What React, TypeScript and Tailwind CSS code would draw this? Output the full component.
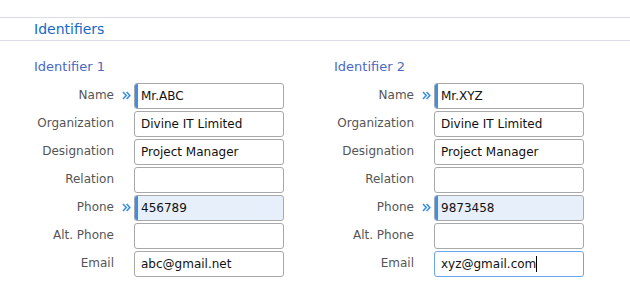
import React from 'react';

type Field = {
  label: string;
  value: string;
  required?: boolean;
  tint?: boolean;
  focused?: boolean;
};

const Chevrons: React.FC = () => (
  <svg width="9" height="9" viewBox="0 0 9 9" className="text-[#3b8fe8]">
    <path d="M1 1l3.2 3.5L1 8M4.6 1l3.2 3.5L4.6 8" fill="none" stroke="currentColor" strokeWidth="1.6" />
  </svg>
);

const Row: React.FC<{ field: Field }> = ({ field }) => (
  <div className="flex items-center h-[26px]">
    <div className="w-[80px] text-right text-[12px] text-[#555] pb-[2px]">{field.label}</div>
    <div className="w-[20px] flex justify-start pl-[8px] pb-[2px]">{field.required && <Chevrons />}</div>
    <div
      className={`relative w-[150px] h-[26px] rounded-[3px] border flex items-center pl-[6px] text-[12px] text-[#111] overflow-hidden ${
        field.focused ? 'border-[#6aa6f0]' : 'border-[#a8a8a8]'
      } ${field.tint ? 'bg-[#e7effb]' : 'bg-white'}`}
    >
      {field.required && <div className="absolute left-0 top-0 bottom-0 w-[3px] bg-[#3b8fe8]" />}
      <span>{field.value}</span>
      {field.focused && <span className="w-px h-[16px] bg-black" />}
    </div>
  </div>
);

const Identifier: React.FC<{ title: string; fields: Field[] }> = ({ title, fields }) => (
  <div className="w-[300px] shrink-0">
    <div className="text-[13px] leading-none text-[#4a6ac2] h-[24px] pt-[1px]">{title}</div>
    <div className="flex flex-col gap-[2px]">
      {fields.map((f, i) => (
        <Row key={i} field={f} />
      ))}
    </div>
  </div>
);

const App: React.FC = () => {
  const one: Field[] = [
    { label: 'Name', value: 'Mr.ABC', required: true },
    { label: 'Organization', value: 'Divine IT Limited' },
    { label: 'Designation', value: 'Project Manager' },
    { label: 'Relation', value: '' },
    { label: 'Phone', value: '456789', required: true, tint: true },
    { label: 'Alt. Phone', value: '' },
    { label: 'Email', value: 'abc@gmail.net' },
  ];
  const two: Field[] = [
    { label: 'Name', value: 'Mr.XYZ', required: true },
    { label: 'Organization', value: 'Divine IT Limited' },
    { label: 'Designation', value: 'Project Manager' },
    { label: 'Relation', value: '' },
    { label: 'Phone', value: '9873458', required: true, tint: true },
    { label: 'Alt. Phone', value: '' },
    { label: 'Email', value: 'xyz@gmail.com', focused: true },
  ];

  return (
    <div className="w-[630px] h-[305px] bg-white pt-[17px] overflow-hidden font-['DejaVu_Sans',sans-serif]">
      <div className="h-[24px] border-y border-[#dcdbe8] pl-[34px] flex items-center">
        <span className="text-[14px] text-[#1668c8] leading-none">Identifiers</span>
      </div>
      <div className="flex pl-[34px] pt-[18px]">
        <Identifier title="Identifier 1" fields={one} />
        <Identifier title="Identifier 2" fields={two} />
      </div>
    </div>
  );
};

export default App;
